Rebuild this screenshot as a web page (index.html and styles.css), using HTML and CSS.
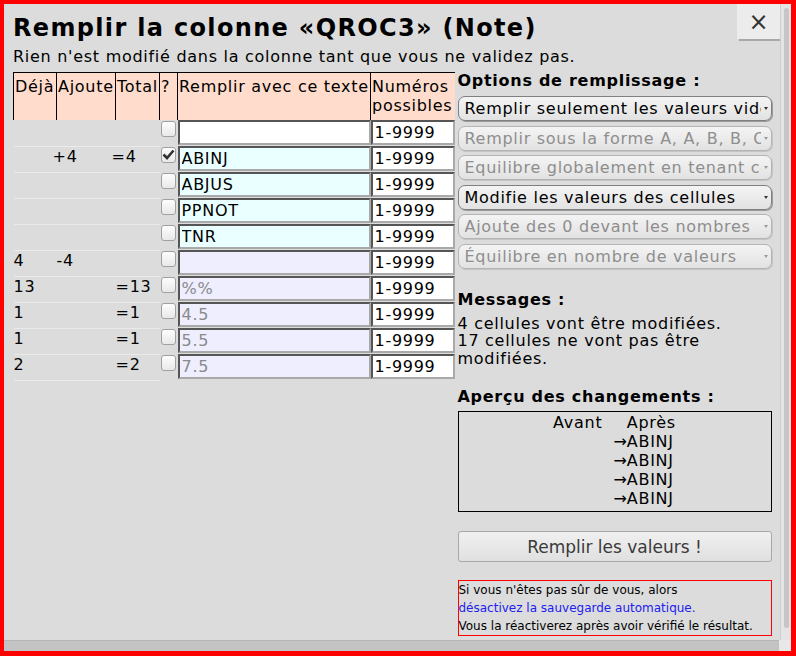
FILE: index.html
```html
<!DOCTYPE html>
<html lang="fr">
<head>
    <meta charset="UTF-8">
    <title>Remplir la colonne</title>
    <link rel="stylesheet" href="styles.css">
</head>
<body>
<div class="frame">
    <div class="viewport">
        <div class="content">
            <div class="head">
                <div class="head-text">
                    <h1>Remplir la colonne «QROC3» (Note)</h1>
                    <p class="subtitle">Rien n'est modifié dans la colonne tant que vous ne validez pas.</p>
                </div>
                <button class="close">×</button>
            </div>
            <div class="main">
                <table class="fill">
                    <colgroup>
                        <col class="c-deja"><col class="c-ajoute"><col class="c-total"><col class="c-check"><col class="c-texte"><col class="c-num">
                    </colgroup>
                    <thead>
                        <tr>
                            <th>Déjà</th>
                            <th>Ajoute</th>
                            <th>Total</th>
                            <th>?</th>
                            <th>Remplir avec ce texte</th>
                            <th>Numéros possibles</th>
                        </tr>
                    </thead>
                    <tbody>
                        <tr>
                            <td></td><td></td><td></td>
                            <td><span class="cb"></span></td>
                            <td><input class="txt" type="text" value=""></td>
                            <td><input class="num" type="text" value="1-9999"></td>
                        </tr>
                        <tr class="used">
                            <td></td><td class="shift">+4</td><td class="shift">=4</td>
                            <td><span class="cb checked"><svg width="13" height="11" viewBox="0 0 13 11"><path d="M1.5 5.5 L5 9 L11.5 1.5" fill="none" stroke="#333" stroke-width="2.6"/></svg></span></td>
                            <td><input class="txt" type="text" value="ABINJ"></td>
                            <td><input class="num" type="text" value="1-9999"></td>
                        </tr>
                        <tr class="used">
                            <td></td><td></td><td></td>
                            <td><span class="cb"></span></td>
                            <td><input class="txt" type="text" value="ABJUS"></td>
                            <td><input class="num" type="text" value="1-9999"></td>
                        </tr>
                        <tr class="used">
                            <td></td><td></td><td></td>
                            <td><span class="cb"></span></td>
                            <td><input class="txt" type="text" value="PPNOT"></td>
                            <td><input class="num" type="text" value="1-9999"></td>
                        </tr>
                        <tr class="used">
                            <td></td><td></td><td></td>
                            <td><span class="cb"></span></td>
                            <td><input class="txt" type="text" value="TNR"></td>
                            <td><input class="num" type="text" value="1-9999"></td>
                        </tr>
                        <tr class="other">
                            <td>4</td><td>-4</td><td></td>
                            <td><span class="cb"></span></td>
                            <td><input class="txt" type="text" value=""></td>
                            <td><input class="num" type="text" value="1-9999"></td>
                        </tr>
                        <tr class="other">
                            <td>13</td><td></td><td>=13</td>
                            <td><span class="cb"></span></td>
                            <td><input class="txt" type="text" placeholder="%%"></td>
                            <td><input class="num" type="text" value="1-9999"></td>
                        </tr>
                        <tr class="other">
                            <td>1</td><td></td><td>=1</td>
                            <td><span class="cb"></span></td>
                            <td><input class="txt" type="text" placeholder="4.5"></td>
                            <td><input class="num" type="text" value="1-9999"></td>
                        </tr>
                        <tr class="other">
                            <td>1</td><td></td><td>=1</td>
                            <td><span class="cb"></span></td>
                            <td><input class="txt" type="text" placeholder="5.5"></td>
                            <td><input class="num" type="text" value="1-9999"></td>
                        </tr>
                        <tr class="other">
                            <td>2</td><td></td><td>=2</td>
                            <td><span class="cb"></span></td>
                            <td><input class="txt" type="text" placeholder="7.5"></td>
                            <td><input class="num" type="text" value="1-9999"></td>
                        </tr>
                    </tbody>
                </table>

                <div class="side">
                    <h2 class="options-title">Options de remplissage :</h2>
                    <div class="select"><span class="select-text">Remplir seulement les valeurs vides</span><span class="arrow"></span></div>
                    <div class="select disabled"><span class="select-text">Remplir sous la forme A, A, B, B, C, C</span><span class="arrow"></span></div>
                    <div class="select disabled"><span class="select-text">Equilibre globalement en tenant compte</span><span class="arrow"></span></div>
                    <div class="select"><span class="select-text">Modifie les valeurs des cellules</span><span class="arrow"></span></div>
                    <div class="select disabled"><span class="select-text">Ajoute des 0 devant les nombres</span><span class="arrow"></span></div>
                    <div class="select disabled"><span class="select-text">Équilibre en nombre de valeurs</span><span class="arrow"></span></div>

                    <h2 class="messages-title">Messages :</h2>
                    <p class="messages">4 cellules vont être modifiées.<br>17 cellules ne vont pas être modifiées.</p>

                    <h2 class="preview-title">Aperçu des changements :</h2>
                    <div class="preview">
                        <table>
                            <tr><td class="before">Avant</td><td class="arrow-col"></td><td>Après</td></tr>
                            <tr><td class="before"></td><td class="arrow-col">→</td><td>ABINJ</td></tr>
                            <tr><td class="before"></td><td class="arrow-col">→</td><td>ABINJ</td></tr>
                            <tr><td class="before"></td><td class="arrow-col">→</td><td>ABINJ</td></tr>
                            <tr><td class="before"></td><td class="arrow-col">→</td><td>ABINJ</td></tr>
                        </table>
                    </div>

                    <button class="fill-btn">Remplir les valeurs !</button>

                    <div class="note">
                        Si vous n'êtes pas sûr de vous, alors<br>
                        <a href="#">désactivez la sauvegarde automatique.</a><br>
                        Vous la réactiverez après avoir vérifié le résultat.
                    </div>
                </div>
            </div>
        </div>
        <div class="vscroll"><div class="vthumb"></div></div>
    </div>
    <div class="hscroll"><div class="hthumb"></div><div class="corner"></div></div>
</div>
</body>
</html>
```

FILE: styles.css
```css
body { margin: 0; font-family: "DejaVu Sans", sans-serif; font-size: 16px; letter-spacing: 0.72px; color: #000; }
.frame { width: 796px; height: 656px; box-sizing: border-box; border: solid #ff0000; border-width: 4px 5px 5px 4px; background: #dcdcdc; display: flex; flex-direction: column; overflow: hidden; }
.viewport { flex: 1; display: flex; min-height: 0; }
.content { flex: 1; padding-left: 9px; overflow: hidden; }

.head { display: flex; justify-content: space-between; align-items: flex-start; }
.head-text { padding-top: 10px; }
h1 { margin: 0; font-size: 24px; line-height: 28px; font-weight: bold; letter-spacing: 1.33px; white-space: nowrap; }
.subtitle { margin: 5px 0 0; line-height: 19px; white-space: nowrap; }
.close { flex: none; width: 43px; height: 35px; margin: 0; padding: 0; border: none; background: #ececec; box-shadow: 2px 2px 0 #a8a8a8; font-family: "DejaVu Sans", sans-serif; font-size: 24px; color: #333; cursor: pointer; }

.main { display: flex; align-items: flex-start; margin-top: 6px; margin-right: 7px; }

.fill { flex: none; table-layout: fixed; width: 441px; border-collapse: collapse; }
.c-deja { width: 43px; }
.c-ajoute { width: 59px; }
.c-total { width: 44px; }
.c-check { width: 18px; }
.c-texte { width: 193px; }
.c-num { width: 84px; }
.fill th { background: #ffdccc; border-left: 1px solid #000; border-top: 1px solid #000; padding: 4px 1px 5px; line-height: 19px; font-weight: normal; text-align: left; vertical-align: top; overflow: hidden; }
.fill td { height: 25px; padding: 0; vertical-align: top; border-bottom: 1px solid #eaeaea; line-height: 19px; white-space: nowrap; }
.fill td:nth-child(4), .fill td:nth-child(5), .fill td:nth-child(6) { border-bottom: none; }
.fill td.shift { text-indent: -4px; }

.cb { display: block; width: 15px; height: 16px; margin: 1px 0 0 1px; box-sizing: border-box; border: 1px solid #a0a0a0; border-radius: 3px; background: linear-gradient(#fdfdfd, #e8e8e8); }
.cb svg { display: block; margin: 1px 0 0 0; }

.txt, .num { display: block; width: 100%; height: 25px; margin: 0 0 1px; box-sizing: border-box; border: 2px inset #a9a9a9; padding: 0 2px; font-family: "DejaVu Sans", sans-serif; font-size: 16px; letter-spacing: 0.72px; color: #000; background: #fff; }
.used .txt { background: #eaffff; }
.other .txt { background: #eeeeff; }
.txt::placeholder { color: #8a8a8a; }

.side { width: 314px; margin-left: 3px; }
.side h2 { margin: 0; font-size: 16px; line-height: 19px; font-weight: bold; }
.side .options-title { margin-top: -1px; }

.select { display: flex; align-items: center; height: 25px; box-sizing: border-box; margin-top: 4.5px; padding: 0 3px 0 6px; border: 1px solid #808080; border-radius: 7px; background: linear-gradient(#f4f4f4, #e2e2e2); box-shadow: 1px 1px 0 #9a9a9a; }
.options-title + .select { margin-top: 6px; }
.select-text { flex: 1; overflow: hidden; white-space: nowrap; }
.arrow { flex: none; width: 0; height: 0; margin-left: 3px; border-left: 2.5px solid transparent; border-right: 2.5px solid transparent; border-top: 3px solid #333; }
.select.disabled { border-color: #b4b4b4; box-shadow: 1px 1px 0 #c4c4c4; color: #8e8e8e; }
.select.disabled .arrow { border-top-color: #999; }

.side .messages-title { margin-top: 21.5px; }
.messages { margin: 5.5px 0 0; line-height: 17.5px; }
.side .preview-title { margin-top: 19.5px; }
.preview { margin-top: 5.5px; border: 1px solid #000; padding: 1px 0 3px; }
.preview table { margin: 0 auto; border-collapse: collapse; }
.preview td { padding: 0; line-height: 19px; }
.preview .before { padding-right: 11px; text-align: right; }
.preview .arrow-col { width: 9px; letter-spacing: 0; }

.fill-btn { display: block; width: 100%; height: 31px; margin-top: 19px; border: 1px solid #a8a8a8; border-radius: 3px; background: linear-gradient(#f0f0f0, #e0e0e0); font-family: "DejaVu Sans", sans-serif; font-size: 17px; color: #3a3a3a; }

.note { margin-top: 18px; border: 1px solid #ff0000; font-size: 12px; line-height: 18px; letter-spacing: 0; }
.note a { color: #2020f0; text-decoration: none; }

.vscroll { width: 11px; box-sizing: border-box; border-left: 1px solid #cfcfcf; background: #e4e4e4; padding: 4px 2px 12px 3px; }
.vthumb { height: 100%; border-radius: 3px; background: #c6c6c6; }
.hscroll { height: 11px; display: flex; }
.hthumb { flex: 1; background: #c3c3c3; border-top: 1px solid #b5b5b5; }
.corner { width: 12px; background: #e8e8e8; }
```
